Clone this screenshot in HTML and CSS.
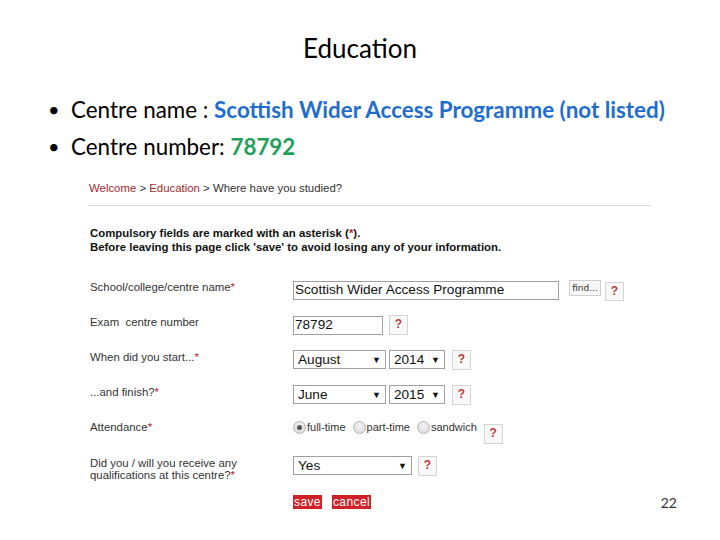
FILE: index.html
```html
<!DOCTYPE html>
<html>
<head>
<meta charset="utf-8">
<link rel="stylesheet" href="styles.css">
</head>
<body>
<div class="slide">
  <h1 class="title">Education</h1>
  <ul class="points">
    <li><span class="dot">•</span><span>Centre name : <b class="blue">Scottish Wider Access Programme (not listed)</b></span></li>
    <li><span class="dot">•</span><span>Centre number: <b class="green">78792</b></span></li>
  </ul>
  <div class="form">
    <div class="crumbs"><span class="link">Welcome</span> &gt; <span class="link">Education</span> &gt; Where have you studied?</div>
    <div class="rule"></div>
    <div class="notice">Compulsory fields are marked with an asterisk (<span class="req">*</span>).<br>Before leaving this page click 'save' to avoid losing any of your information.</div>
    <div class="rows">
      <div class="label">School/college/centre name<span class="req">*</span></div>
      <div class="ctrl c1">
        <div class="input w-name">Scottish Wider Access Programme</div>
        <div class="find">find...</div>
        <div class="help h-name">?</div>
      </div>

      <div class="label">Exam&nbsp; centre number</div>
      <div class="ctrl">
        <div class="input w-num">78792</div>
        <div class="help h-num">?</div>
      </div>

      <div class="label">When did you start...<span class="req">*</span></div>
      <div class="ctrl">
        <div class="select w-month"><span>August</span><span class="arr">▼</span></div>
        <div class="select w-year"><span>2014</span><span class="arr">▼</span></div>
        <div class="help h-date">?</div>
      </div>

      <div class="label">...and finish?<span class="req">*</span></div>
      <div class="ctrl">
        <div class="select w-month"><span>June</span><span class="arr">▼</span></div>
        <div class="select w-year"><span>2015</span><span class="arr">▼</span></div>
        <div class="help h-date">?</div>
      </div>

      <div class="label">Attendance<span class="req">*</span></div>
      <div class="ctrl radios">
        <span class="radio on"></span><span class="rtext">full-time</span>
        <span class="radio"></span><span class="rtext">part-time</span>
        <span class="radio"></span><span class="rtext">sandwich</span>
        <div class="help h-att">?</div>
      </div>

      <div class="label">Did you / will you receive any<br>qualifications at this centre?<span class="req">*</span></div>
      <div class="ctrl">
        <div class="select w-yes"><span>Yes</span><span class="arr">▼</span></div>
        <div class="help h-yes">?</div>
      </div>

      <div class="label"></div>
      <div class="ctrl actions">
        <span class="btn">save</span>
        <span class="btn cancel">cancel</span>
        <span class="pagenum">22</span>
      </div>
    </div>
  </div>
</div>
</body>
</html>
```

FILE: styles.css
```css
html, body {
  margin: 0;
  padding: 0;
  background: #fff;
}
.slide {
  width: 720px;
  height: 540px;
  overflow: hidden;
  font-family: Lato, "Open Sans", sans-serif;
  color: #000;
}
.title {
  margin: 0;
  padding-top: 33px;
  font-size: 26px;
  line-height: 30px;
  font-weight: normal;
  text-align: center;
}
.points {
  list-style: none;
  margin: 28px 0 0 0;
  padding: 0 0 0 48px;
  font-size: 22.4px;
  line-height: 37px;
}
.points li {
  display: flex;
}
.dot {
  width: 23px;
  font-size: 20px;
}
.blue { color: #1f6dcf; }
.green { color: #21a05a; }

.form {
  margin-top: 16px;
  padding-left: 89px;
  padding-right: 43px;
  font-family: "Liberation Sans", Arial, sans-serif;
  font-size: 11.4px;
  color: #222;
}
.crumbs {
  line-height: 14px;
  color: #333;
}
.link { color: #a3282e; }
.rule {
  width: 562px;
  height: 1px;
  background: #d8d8d8;
  margin-top: 10px;
  margin-left: -1px;
}
.notice {
  margin-top: 20px;
  padding-left: 1px;
  font-weight: bold;
  line-height: 14px;
  color: #111;
}
.req { color: #b3262b; }
.rows {
  margin-top: 26px;
  display: grid;
  grid-template-columns: 204px 1fr;
  row-gap: 15px;
  align-items: start;
}
.label {
  padding-left: 1px;
  line-height: 12px;
  padding-top: 1px;
  color: #333;
}
.ctrl {
  display: flex;
  align-items: flex-start;
  height: 20px;
}
.input, .select {
  box-sizing: border-box;
  border: 1px solid #a0a0a0;
  background: #fff;
  font-size: 13.6px;
  color: #111;
  line-height: 16px;
  padding: 0 1px;
  height: 20px;
}
.input { height: 19px; margin-top: 1px; }
.w-name { width: 266px; }
.w-num { width: 90px; height: 19px; margin-top: 1px; }
.select {
  display: flex;
  justify-content: space-between;
  align-items: center;
  padding: 0 4px 0 4px;
  height: 19px;
}
.arr {
  font-size: 9px;
  color: #111;
}
.w-month { width: 93px; }
.w-year { width: 56px; margin-left: 3px; }
.w-yes { width: 119px; }
.find {
  box-sizing: border-box;
  margin-left: 10px;
  width: 32px;
  height: 16px;
  border: 1px solid #cfcfcf;
  background: #f6f6f6;
  font-family: "DejaVu Sans", sans-serif;
  font-size: 9px;
  line-height: 14px;
  color: #333;
  text-align: center;
}
.help {
  box-sizing: border-box;
  width: 19px;
  height: 19px;
  border: 1px solid #d4d4d4;
  background: #f8f8f8;
  color: #c0393b;
  font-weight: bold;
  font-size: 12px;
  line-height: 17px;
  text-align: center;
}
.h-name { margin-left: 4px; margin-top: 2px; }
.h-num { margin-left: 6px; height: 20px; }
.h-date { margin-left: 7px; height: 20px; }
.h-yes { margin-left: 6px; height: 20px; }
.h-att { margin-left: 7px; margin-top: 3px; height: 20px; }
.radios {
  align-items: flex-start;
  padding-top: 1px;
}
.radio {
  box-sizing: border-box;
  width: 13px;
  height: 13px;
  border-radius: 50%;
  border: 1px solid #b5b5b5;
  background: radial-gradient(circle at 50% 35%, #f4f4f4, #d6d6d6);
  position: relative;
  margin-left: 7px;
}
.radio:first-child { margin-left: 0; }
.radio.on::after {
  content: "";
  position: absolute;
  left: 3px;
  top: 3px;
  width: 5px;
  height: 5px;
  border-radius: 50%;
  background: #555;
}
.rtext {
  margin-left: 1px;
  line-height: 13px;
  color: #333;
  font-size: 11px;
}
.actions {
  height: 14px;
  align-items: flex-start;
  margin-top: -1px;
}
.btn {
  background: #cf2127;
  color: #fff;
  font-size: 12px;
  line-height: 14px;
  height: 14px;
  padding: 0 1px;
  letter-spacing: 0.4px;
}
.cancel { margin-left: 10px; }
.pagenum {
  margin-left: auto;
  font-family: Lato, sans-serif;
  font-size: 14px;
  line-height: 16px;
  color: #333;
}
```
